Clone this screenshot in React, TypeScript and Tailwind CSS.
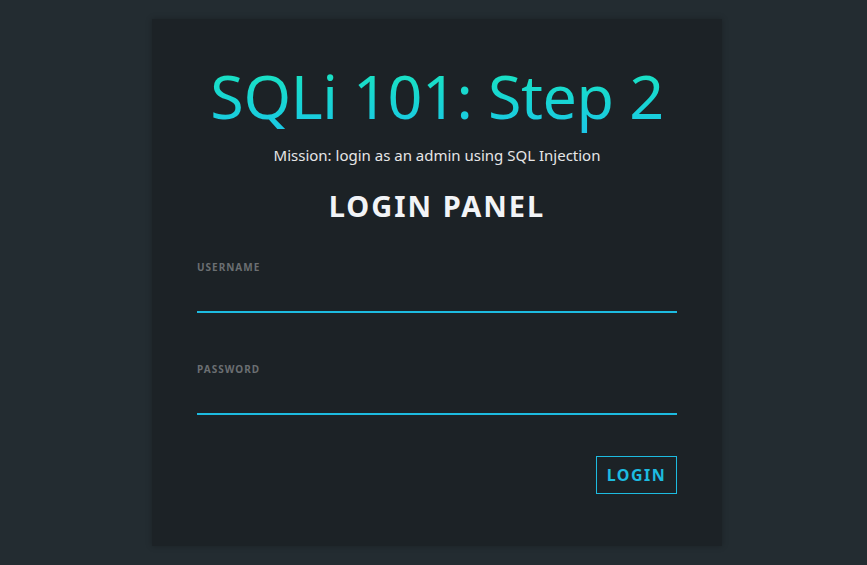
import React from "react";

export default function App() {
  return (
    <div
      className="min-h-[565px] w-full bg-[#232c31] flex justify-center pt-[19px] pl-[7px]"
      style={{ fontFamily: '"Noto Sans", "Open Sans", sans-serif' }}
    >
      <div className="w-[570px] h-[527px] bg-[#1c2226] shadow-[0_0_6px_rgba(0,0,0,0.25)] px-[45px] pt-[35px] flex flex-col">
        <h1 className="text-center text-[61px] leading-[84px] font-normal bg-gradient-to-b from-[#1de9b6] to-[#1dc4e9] bg-clip-text text-transparent tracking-[-0.4px]">
          SQLi 101: Step 2
        </h1>
        <p className="text-center text-[15px] leading-[20px] text-[#e6e6e6] mt-[7px]">
          Mission: login as an admin using SQL Injection
        </p>
        <h2 className="text-center text-[29px] leading-[38px] font-bold text-[#f2f4f7] tracking-[2px] mt-[22px]">
          LOGIN PANEL
        </h2>
        <div className="mt-[35px] flex flex-col">
          <label className="text-[10px] leading-[14px] font-bold tracking-[1px] text-[#6b6f72]">USERNAME</label>
          <input className="mt-[9px] h-[30px] bg-transparent border-b-2 border-[#1dbbe0] outline-none text-white" />
        </div>
        <div className="mt-[49px] flex flex-col">
          <label className="text-[10px] leading-[14px] font-bold tracking-[1px] text-[#6b6f72]">PASSWORD</label>
          <input type="password" className="mt-[9px] h-[30px] bg-transparent border-b-2 border-[#1dbbe0] outline-none text-white" />
        </div>
        <div className="mt-[41px] flex justify-end">
          <button className="w-[81px] h-[38px] border border-[#1dbbe0] text-[#1dbbe0] text-[16px] font-bold tracking-[1.5px]">
            LOGIN
          </button>
        </div>
      </div>
    </div>
  );
}
